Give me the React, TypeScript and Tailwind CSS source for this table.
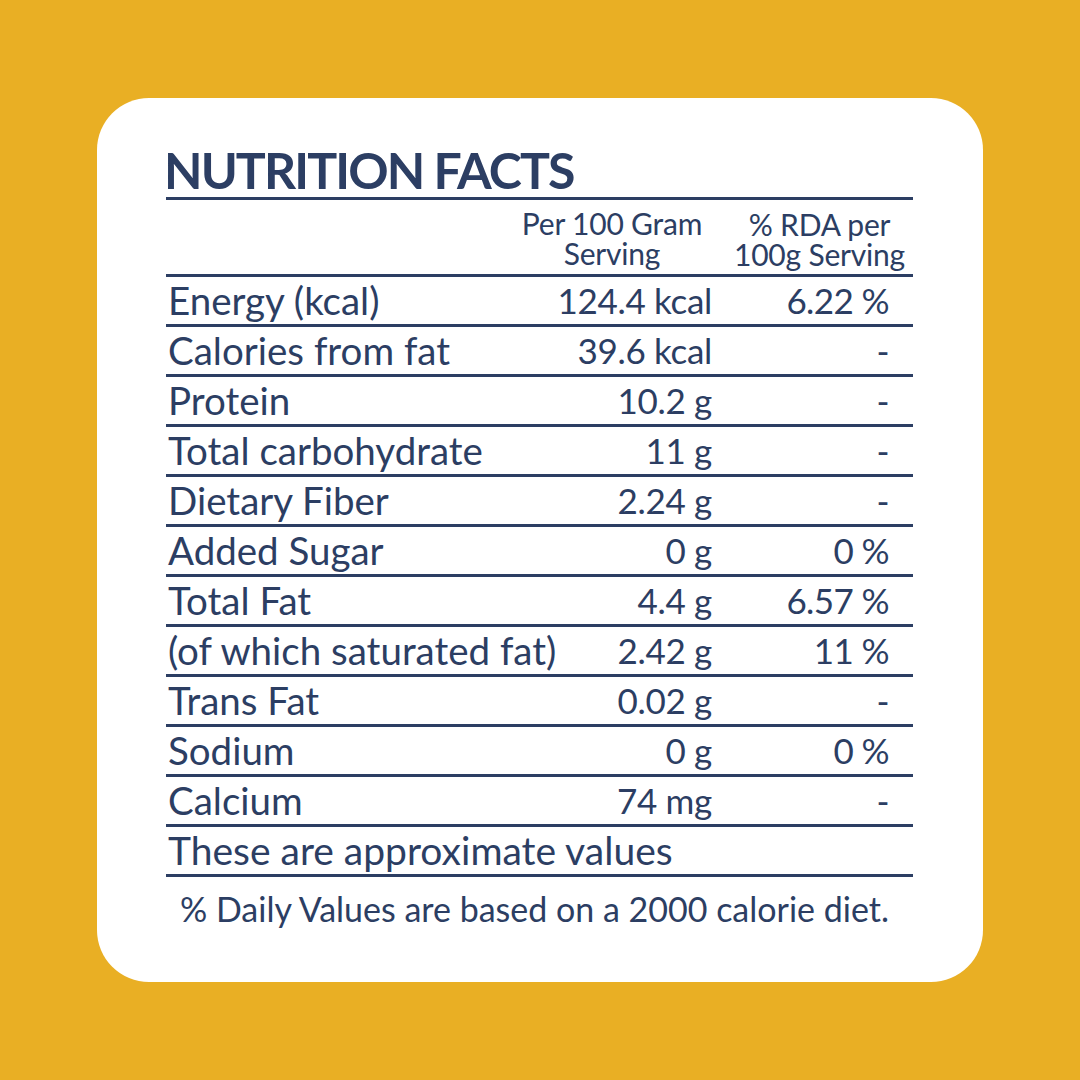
const rows = [
  ["Energy (kcal)", "124.4 kcal", "6.22 %"],
  ["Calories from fat", "39.6 kcal", "-"],
  ["Protein", "10.2 g", "-"],
  ["Total carbohydrate", "11 g", "-"],
  ["Dietary Fiber", "2.24 g", "-"],
  ["Added Sugar", "0 g", "0 %"],
  ["Total Fat", "4.4 g", "6.57 %"],
  ["(of which saturated fat)", "2.42 g", "11 %"],
  ["Trans Fat", "0.02 g", "-"],
  ["Sodium", "0 g", "0 %"],
  ["Calcium", "74 mg", "-"],
];

export default function App() {
  return (
    <div className="w-[1080px] h-[1080px] bg-[#e9af24] flex items-center justify-center font-['Lato',sans-serif] text-[#2c3e63]">
      <div className="w-[886px] h-[884px] bg-white rounded-[52px] pt-[44px] pl-[69px] pr-[70px]">
        <h1 className="text-[50px] font-bold leading-[56px] tracking-[-1.9px] ml-[-2px]">NUTRITION FACTS</h1>
        <div className="border-t-[3px] border-[#2c3e63] mt-[-1px]">
          <div className="grid grid-cols-[346px_200px_201px] h-[77px] border-b-[3px] border-[#2c3e63] text-[30px] leading-[30px] tracking-[-0.2px] items-center">
            <div />
            <div className="text-center pt-[2px]">Per 100 Gram<br />Serving</div>
            <div className="text-center pl-[14px] pt-[4px]">% RDA per<br />100g Serving</div>
          </div>
          {rows.map((r) => (
            <div key={r[0]} className="grid grid-cols-[346px_200px_201px] h-[50px] border-b-[3px] border-[#2c3e63] leading-[47px] whitespace-nowrap">
              <div className="pl-[2px] text-[38.5px]">{r[0]}</div>
              <div className="text-right text-[35px] tracking-[-0.3px]">{r[1]}</div>
              <div className="text-right pr-[24px] text-[35px] tracking-[-0.6px]">{r[2]}</div>
            </div>
          ))}
          <div className="h-[50px] border-b-[3px] border-[#2c3e63] text-[39px] leading-[47px] pl-[2px]">
            These are approximate values
          </div>
          <div className="text-[34px] leading-[40px] pl-[14px] pt-[12px] whitespace-nowrap">
            % Daily Values are based on a 2000 calorie diet.
          </div>
        </div>
      </div>
    </div>
  );
}
